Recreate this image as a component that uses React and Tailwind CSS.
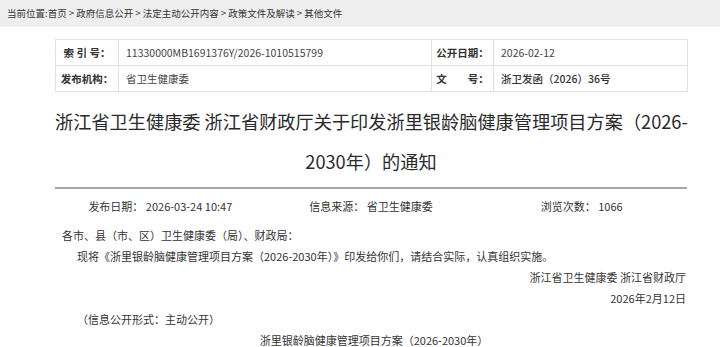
export default function App() {
  const font = { fontFamily: '"Noto Sans CJK SC", "Noto Sans", sans-serif' };
  return (
    <div className="w-[720px] h-[347px] overflow-hidden bg-white text-[#333]" style={font}>
      <div className="h-[27px] bg-[#eeeeee] flex items-center px-[7px] text-[9.5px] text-[#333] whitespace-pre">
        {"当前位置:首页 > 政府信息公开 > 法定主动公开内容 > 政策文件及解读 > 其他文件"}
      </div>

      <div className="ml-[55px] w-[632px]">
        <table className="mt-[12px] w-[632px] border-collapse text-[10.5px] table-fixed">
          <colgroup>
            <col className="w-[63px]" />
            <col className="w-[313px]" />
            <col className="w-[62px]" />
            <col className="w-[194px]" />
          </colgroup>
          <tbody>
            <tr className="h-[26px]">
              <td className="border border-[#e2e2e2] text-center font-semibold text-[#333] whitespace-nowrap">索 引 号：</td>
              <td className="border border-[#e2e2e2] pl-[7px] text-[#444]">11330000MB1691376Y/2026-1010515799</td>
              <td className="border border-[#e2e2e2] text-center font-semibold text-[#333] whitespace-nowrap">公开日期：</td>
              <td className="border border-[#e2e2e2] pl-[7px] text-[#444]">2026-02-12</td>
            </tr>
            <tr className="h-[26px]">
              <td className="border border-[#e2e2e2] text-center font-semibold text-[#333] whitespace-nowrap">发布机构：</td>
              <td className="border border-[#e2e2e2] pl-[7px] text-[#444]">省卫生健康委</td>
              <td className="border border-[#e2e2e2] text-center font-semibold text-[#333] whitespace-nowrap">文　　号：</td>
              <td className="border border-[#e2e2e2] pl-[7px] text-[#333] font-medium">浙卫发函（2026）36号</td>
            </tr>
          </tbody>
        </table>

        <h1 className="mt-[9px] text-center text-[18.2px] leading-[40px] text-[#2a2a2a] font-normal whitespace-nowrap">
          浙江省卫生健康委 浙江省财政厅关于印发浙里银龄脑健康管理项目方案（2026-
          <br />
          2030年）的通知
        </h1>

        <div className="mt-[6px] h-[2px] bg-[#a6a6a6]" />

        <div className="mt-[7px] grid grid-cols-3 text-center text-[11px] leading-[21px] text-[#333]">
          <div>发布日期： 2026-03-24 10:47</div>
          <div>信息来源： 省卫生健康委</div>
          <div>浏览次数： 1066</div>
        </div>

        <div className="mt-[8px] pl-[7px] pr-[1px] text-[11px] leading-[21px] text-[#333]">
          <p>各市、县（市、区）卫生健康委（局）、财政局：</p>
          <p className="pl-[15px]">现将《浙里银龄脑健康管理项目方案（2026-2030年）》印发给你们，请结合实际，认真组织实施。</p>
          <p className="text-right">浙江省卫生健康委 浙江省财政厅</p>
          <p className="text-right">2026年2月12日</p>
          <p className="pl-[15px]">（信息公开形式：主动公开）</p>
          <p className="text-center">浙里银龄脑健康管理项目方案（2026-2030年）</p>
        </div>
      </div>
    </div>
  );
}
